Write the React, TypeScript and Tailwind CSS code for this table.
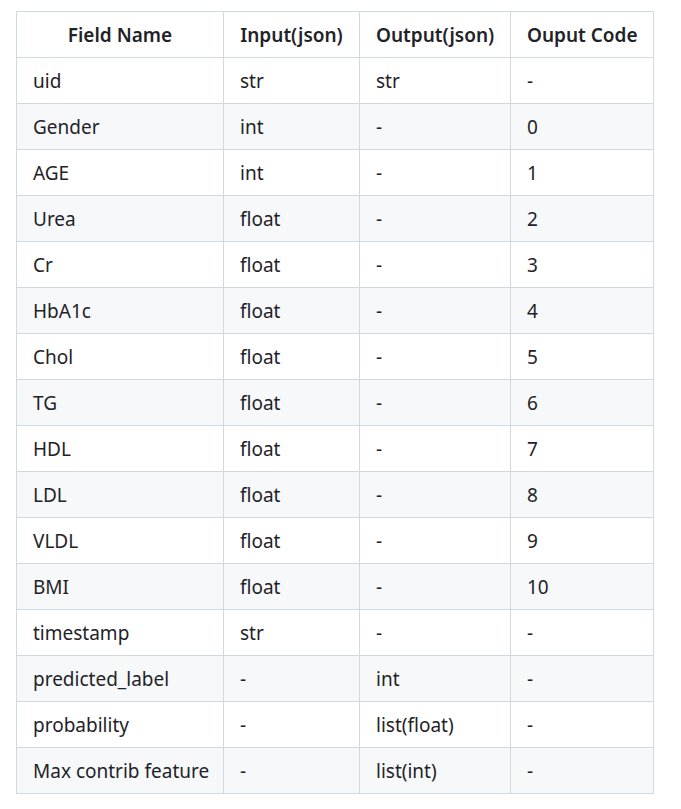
import React from "react";

const rows: [string, string, string, string][] = [
  ["uid", "str", "str", "-"],
  ["Gender", "int", "-", "0"],
  ["AGE", "int", "-", "1"],
  ["Urea", "float", "-", "2"],
  ["Cr", "float", "-", "3"],
  ["HbA1c", "float", "-", "4"],
  ["Chol", "float", "-", "5"],
  ["TG", "float", "-", "6"],
  ["HDL", "float", "-", "7"],
  ["LDL", "float", "-", "8"],
  ["VLDL", "float", "-", "9"],
  ["BMI", "float", "-", "10"],
  ["timestamp", "str", "-", "-"],
  ["predicted_label", "-", "int", "-"],
  ["probability", "-", "list(float)", "-"],
  ["Max contrib feature", "-", "list(int)", "-"],
];

const headers = ["Field Name", "Input(json)", "Output(json)", "Ouput Code"];

export default function App() {
  return (
    <div
      className="bg-white min-h-[809px] pl-4 pt-[11px] text-[#1f2328]"
      style={{ fontFamily: '"Noto Sans", "Open Sans", sans-serif' }}
    >
      <table className="table-fixed border-collapse w-[637px] text-[19px] leading-[30px]">
        <colgroup>
          <col className="w-[207px]" />
          <col className="w-[136px]" />
          <col className="w-[151px]" />
          <col className="w-[143px]" />
        </colgroup>
        <thead>
          <tr className="bg-white">
            {headers.map((h) => (
              <th
                key={h}
                className="border border-[#d1d9e0] px-4 py-[7.5px] font-semibold text-center whitespace-nowrap"
              >
                {h}
              </th>
            ))}
          </tr>
        </thead>
        <tbody>
          {rows.map((r, i) => (
            <tr key={i} className={i % 2 === 1 ? "bg-[#f6f8fa]" : "bg-white"}>
              {r.map((c, j) => (
                <td
                  key={j}
                  className="border border-[#d1d9e0] px-4 py-[7.5px] text-left whitespace-nowrap"
                >
                  {c}
                </td>
              ))}
            </tr>
          ))}
        </tbody>
      </table>
    </div>
  );
}
